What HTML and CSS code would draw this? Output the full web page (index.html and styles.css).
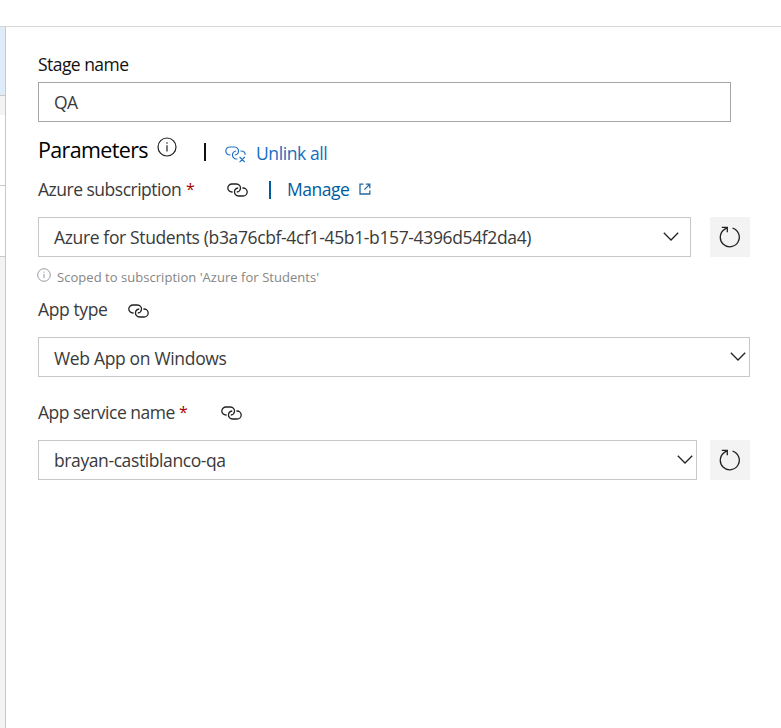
FILE: index.html
```
<!DOCTYPE html>
<html lang="en">
<head>
<meta charset="utf-8">
<title>Stage parameters</title>
<link rel="stylesheet" href="styles.css">
</head>
<body>
<svg class="defs" aria-hidden="true">
  <symbol id="link" viewBox="0 0 21 14"><path d="M5.6 9H5A4.2 4 0 0 1 5 1H9.5A4.2 4 0 0 1 13.5 5.5Q13.2 8.6 9.8 9M15.4 5H16A4.2 4 0 0 1 16 13H11.5A4.2 4 0 0 1 7.5 8.5Q7.8 5.4 11.2 5"/></symbol>
  <symbol id="unlink" viewBox="0 0 21 17"><path d="M5.6 9H5A4.2 4 0 0 1 5 1H9.5A4.2 4 0 0 1 13.5 5.5Q13.2 8.6 9.8 9M15.4 5H16A4.2 4 0 0 1 20.2 8.8M12.4 13H11.5A4.2 4 0 0 1 7.5 8.5Q7.8 5.4 11.2 5M14.6 11L19.8 16.2M19.8 11L14.6 16.2"/></symbol>
  <symbol id="info" viewBox="0 0 20 20"><circle cx="10" cy="10" r="9"/><path d="M10 8.3V14.5M10 5.2V6.8"/></symbol>
  <symbol id="chevron" viewBox="0 0 16 9"><path d="M.8 .8L8 8L15.2 .8"/></symbol>
  <symbol id="refresh" viewBox="0 0 22 22"><path d="M13.6 2.2A9.5 9.5 0 1 1 5.5 3.4L8 1.6M2.8 1.4H8.3V6.2"/></symbol>
  <symbol id="external" viewBox="0 0 12 12"><path d="M4.5 1.2H1V11H10.8V7.5M6.8 1.2H10.8V5.2M10.6 1.4L5.4 6.6"/></symbol>
</svg>
<header class="topbar"></header>
<div class="workspace">
  <aside class="rail">
    <div class="rail-item selected"></div>
    <div class="rail-gap"></div>
    <div class="rail-item first"></div>
    <div class="rail-item second"></div>
  </aside>
  <main class="panel">
    <div class="label stage"><span class="t-stage">Stage name</span></div>
    <div class="field input"><span class="t-qa">QA</span></div>
    <div class="heading">
      <h2>Parameters</h2>
      <svg class="info"><use href="#info"/></svg>
      <i class="bar"></i>
      <svg class="unlink"><use href="#unlink"/></svg>
      <a class="t-unlink">Unlink all</a>
    </div>
    <div class="label subscription">
      <span class="t-sub">Azure subscription</span><span class="req">*</span>
      <svg class="link"><use href="#link"/></svg>
      <i class="bar blue"></i>
      <a class="t-manage">Manage</a>
      <svg class="external"><use href="#external"/></svg>
    </div>
    <div class="row">
      <div class="field sub-field"><span class="t-guid">Azure for Students (b3a76cbf-4cf1-45b1-b157-4396d54f2da4)</span><svg class="chevron"><use href="#chevron"/></svg></div>
      <div class="refresh"><svg><use href="#refresh"/></svg></div>
    </div>
    <div class="hint"><svg><use href="#info"/></svg><span>Scoped to subscription 'Azure for Students'</span></div>
    <div class="label type"><span class="t-type">App type</span><svg class="link"><use href="#link"/></svg></div>
    <div class="field type-field"><span class="t-web">Web App on Windows</span><svg class="chevron"><use href="#chevron"/></svg></div>
    <div class="label service"><span class="t-service">App service name</span><span class="req">*</span><svg class="link"><use href="#link"/></svg></div>
    <div class="row">
      <div class="field service-field"><span class="t-brayan">brayan-castiblanco-qa</span><svg class="chevron"><use href="#chevron"/></svg></div>
      <div class="refresh"><svg><use href="#refresh"/></svg></div>
    </div>
  </main>
</div>
</body>
</html>
```
FILE: styles.css
```
* { box-sizing: border-box; }
body { margin: 0; height: 728px; overflow: hidden; background: #fff; color: #3a3a3a; font: 17.5px/24px "Open Sans", "Noto Sans", sans-serif; letter-spacing: -0.5px; white-space: nowrap; }
svg { display: block; flex: none; fill: none; stroke: #222; stroke-width: 1.3; }
.defs { position: absolute; width: 0; height: 0; }
.topbar { height: 27px; border-bottom: 1px solid #d6d6d6; }
.workspace { display: flex; height: 701px; }
.rail { width: 6px; border-right: 1px solid #c8c8c8; background: #f3f3f3; }
.rail-item { background: #fff; border-bottom: 1px solid #c8c8c8; }
.rail-item.selected { height: 69px; background: #deecf9; }
.rail-gap { height: 19px; }
.rail-item.first, .rail-item.second { height: 71px; }
.panel { flex: 1; padding: 25px 31px 0 32px; }
.label, .heading, .hint, .row { display: flex; align-items: center; }
.label { height: 24px; }
.stage { color: #111; margin-bottom: 6px; }
.t-stage { letter-spacing: -0.55px; }
.field { display: flex; align-items: center; justify-content: space-between; height: 40px; border: 1px solid #c8c8c8; padding: 0 11px 0 15px; }
.input { width: 693px; border-color: #a6a6a6; }
.heading { height: 30px; margin-top: 12px; }
h2 { margin: 2px 0 0; width: 120px; color: #000; font: inherit; font-size: 21.5px; line-height: 30px; letter-spacing: -0.65px; }
.heading .info { width: 20px; height: 20px; stroke-width: 1.2; margin: -4px 0 0 -1px; }
.bar { width: 2px; height: 18px; background: #111; margin: 5px 20px 0 27px; }
.unlink { width: 21px; height: 17px; stroke: #2272c3; stroke-width: 1.2; margin: 11px 10px 0 -1px; }
a { color: #106ebe; }
.t-unlink { margin-top: 8px; letter-spacing: -0.4px; }
.subscription { margin: 13px 0 16px; }
.req { color: #a80000; width: 11px; font-size: 16px; }
.t-sub { width: 148px; }
.link { width: 21px; height: 14px; }
.subscription .link { margin: 1px 0 0 30px; }
.bar.blue { background: #005a9e; margin: 2px 16px 0 21px; }
.t-manage { color: #005a9e; width: 72px; }
.external { width: 12px; height: 12px; stroke: #2468a2; }
.row { justify-content: space-between; width: 712px; }
.sub-field { width: 653px; }
.t-guid { letter-spacing: -0.36px; }
.chevron { width: 16px; height: 9px; margin-top: -1px; }
.refresh { width: 40px; height: 40px; background: #f3f3f3; padding: 9px; }
.refresh svg { width: 22px; height: 22px; }
.hint { height: 20px; margin-top: 10px; font-size: 13px; line-height: 20px; letter-spacing: 0.04px; color: #858585; }
.hint svg { width: 14px; height: 14px; stroke: #8a9299; margin: -5px 6px 0 -1px; }
.type { margin: 11px 0 15px; }
.t-type { width: 90px; margin-top: -2px; letter-spacing: -0.38px; }
.type .link { margin-top: 1px; }
.type-field { width: 712px; padding-right: 3px; }
.t-web { letter-spacing: -0.33px; margin-top: 2px; }
.service { margin: 24px 0 15px; }
.t-service { width: 141px; margin-top: -2px; }
.service .req { margin-top: -2px; }
.service .link { margin-left: 31px; }
.service-field { width: 659px; padding-right: 3px; }
.t-brayan { letter-spacing: -0.4px; }
```
